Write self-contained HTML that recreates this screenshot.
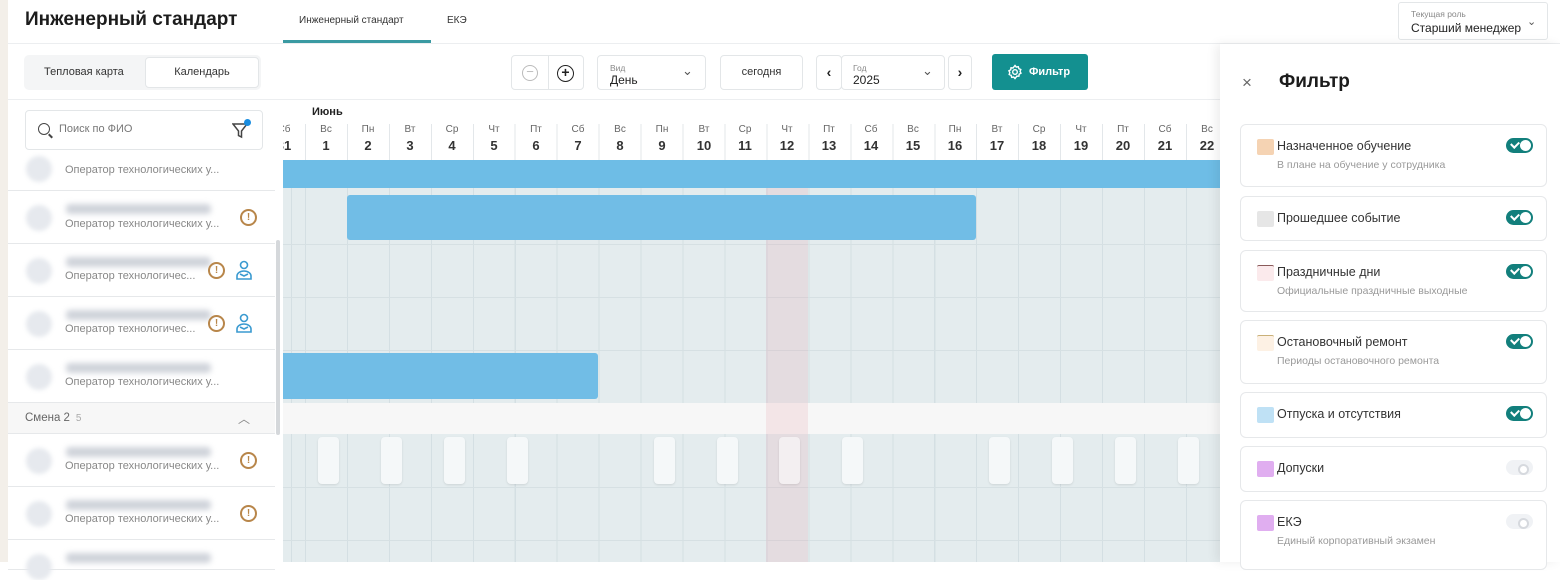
<!DOCTYPE html><html><head><meta charset="utf-8"><style>
*{box-sizing:border-box;margin:0;padding:0}
body{width:1560px;height:562px;overflow:hidden;position:relative;background:#fff;font-family:"Liberation Sans","DejaVu Sans",sans-serif;color:#222}
.a{position:absolute}
.btn{position:absolute;border:1px solid #e3e6e8;border-radius:4px;background:#fff}
.hd{position:absolute;top:24px;width:42px;text-align:center}
.hd .w{font-size:10px;color:#666;display:block}
.hd .n{font-size:13px;font-weight:bold;color:#333;display:block;margin-top:3px}
.row{position:absolute;left:8px;width:267px;border-bottom:1px solid #e6e8ea;background:#fff}
.av{position:absolute;left:18px;width:26px;height:26px;border-radius:50%;background:#e6e9ee;filter:blur(2px)}
.nm{position:absolute;left:58px;height:10px;width:145px;background:#cfd3da;border-radius:4px;filter:blur(3px)}
.rl{position:absolute;left:57px;font-size:11px;color:#888;white-space:nowrap}
.ex{position:absolute;width:17px;height:17px;border:2px solid #b8864a;border-radius:50%;font-size:10px;font-weight:bold;color:#b8864a;text-align:center;line-height:13px}
.card{position:absolute;left:1240px;width:307px;border:1px solid #e6e8ea;border-radius:6px;background:#fff}
.sw{position:absolute;left:16px;top:14px;width:17px;height:16px;border-radius:2px}
.ct{position:absolute;left:36px;top:14px;font-size:12.5px;color:#333}
.cs{position:absolute;left:36px;top:34px;font-size:10.5px;color:#999}
.tg{position:absolute;right:13px;top:13px;width:27px;height:15px;border-radius:8px;background:#127f7c}
.tg:after{content:"";position:absolute;right:2px;top:2px;width:11px;height:11px;border-radius:50%;background:#fff}
.tg:before{content:"";position:absolute;left:5px;top:3px;width:6px;height:4px;border-left:2px solid #fff;border-bottom:2px solid #fff;transform:rotate(-45deg)}
.tg.off{background:#f0f2f5}
.tg.off:before{display:none}
.tg.off:after{border:2px solid #d6d9de;width:7px;height:7px;top:4px;right:4px}
.wb{position:absolute;top:437px;width:21px;height:47px;border-radius:4px;background:#f5f8f9;box-shadow:0 1px 2px rgba(0,0,0,.1)}
.pi{position:absolute;width:18px;height:20px}
</style></head><body>
<div class="a" style="left:0;top:0;width:8px;height:562px;background:#f3efe9"></div>
<div class="a" style="left:25px;top:9px;font-size:19px;font-weight:bold;color:#1c1c1c">Инженерный стандарт</div>
<div class="a" style="left:299px;top:15px;font-size:10px;color:#333">Инженерный стандарт</div>
<div class="a" style="left:283px;top:40px;width:148px;height:3px;background:#3a9aa2"></div>
<div class="a" style="left:447px;top:15px;font-size:10px;color:#333">ЕКЭ</div>
<div class="a" style="left:8px;top:43px;width:1552px;height:1px;background:#eceef0"></div>
<div class="btn" style="left:1398px;top:2px;width:150px;height:38px;border-radius:3px"><div class="a" style="left:12px;top:6px;font-size:8.5px;color:#888">Текущая роль</div><div class="a" style="left:12px;top:18px;font-size:12px;color:#222">Старший менеджер</div><div class="a" style="left:128px;top:12px;font-size:11px;color:#555">⌄</div></div>
<!-- toolbar -->
<div class="a" style="left:24px;top:55px;width:237px;height:35px;background:#f4f5f6;border-radius:5px"></div>
<div class="a" style="left:44px;top:66px;font-size:11px;color:#333">Тепловая карта</div>
<div class="btn" style="left:145px;top:57px;width:114px;height:31px;text-align:center;line-height:29px;font-size:11px;color:#333">Календарь</div>
<div class="btn" style="left:511px;top:55px;width:73px;height:35px"><div class="a" style="left:36px;top:0;width:1px;height:33px;background:#e3e6e8"></div><div class="a" style="left:10px;top:9px;width:16px;height:16px;border:1.5px solid #bbb;border-radius:50%;text-align:center;line-height:12px;color:#bbb;font-size:13px">−</div><div class="a" style="left:45px;top:9px;width:17px;height:17px;border:1.8px solid #222;border-radius:50%;text-align:center;line-height:13px;color:#222;font-size:14px;font-weight:bold">+</div></div>
<div class="btn" style="left:597px;top:55px;width:109px;height:35px"><div class="a" style="left:12px;top:7px;font-size:8.5px;color:#888">Вид</div><div class="a" style="left:12px;top:17px;font-size:12px">День</div><div class="a" style="left:84px;top:7px;font-size:13px;color:#555">⌄</div></div>
<div class="btn" style="left:720px;top:55px;width:83px;height:35px;text-align:center;line-height:33px;font-size:11px;color:#333">сегодня</div>
<div class="btn" style="left:816px;top:55px;width:26px;height:35px;text-align:center;line-height:33px;font-size:14px;font-weight:bold">‹</div>
<div class="btn" style="left:841px;top:55px;width:104px;height:35px"><div class="a" style="left:11px;top:7px;font-size:8.5px;color:#888">Год</div><div class="a" style="left:11px;top:17px;font-size:12px">2025</div><div class="a" style="left:80px;top:7px;font-size:13px;color:#555">⌄</div></div>
<div class="btn" style="left:948px;top:55px;width:24px;height:35px;text-align:center;line-height:33px;font-size:14px;font-weight:bold">›</div>
<div class="a" style="left:992px;top:54px;width:96px;height:36px;background:#139090;border-radius:3px;color:#fff;font-size:11px;font-weight:bold;line-height:36px;padding-left:37px">Фильтр</div>
<svg class="a" style="left:1007px;top:64px" width="16" height="16" viewBox="0 0 16 16" fill="none" stroke="#fff" stroke-width="1.4"><circle cx="8" cy="8" r="2.3"/><path d="M8 1.5l1.3 1.6 2-.4.6 2 1.9.8-.7 1.9.9 1.8-1.8 1-.3 2-2-.1L8 14.5l-1.3-1.5-2 .3-.6-2-1.9-.8.6-1.9-.9-1.8 1.8-1 .3-2 2 .2z"/></svg>
<div class="a" style="left:8px;top:99px;width:1212px;height:1px;background:#eceef0"></div>
<!-- search -->
<div class="btn" style="left:25px;top:110px;width:238px;height:40px"><div class="a" style="left:12px;top:12px;width:12px;height:12px;border:1.8px solid #444;border-radius:50%"></div><div class="a" style="left:22px;top:24px;width:5px;height:2px;background:#444;transform:rotate(45deg)"></div><div class="a" style="left:33px;top:12px;font-size:11px;color:#777">Поиск по ФИО</div><svg class="a" style="left:206px;top:11px" width="16" height="17" viewBox="0 0 16 17" fill="none" stroke="#444" stroke-width="1.5"><path d="M1 2h14l-5.5 7v6l-3-1.5V9z"/></svg><div class="a" style="left:218px;top:8px;width:7px;height:7px;border-radius:50%;background:#1a8de0"></div></div>
<!-- grid -->
<div class="a" style="left:283px;top:100px;width:937px;height:462px;overflow:hidden">
<div class="a" style="left:0;top:60px;width:937px;height:402px;background-color:#e4ecee;background-image:repeating-linear-gradient(90deg,#d4dfe3 0 1px,transparent 1px 41.95px);background-position:22px 0"></div>
<div class="a" style="left:0;top:144px;width:937px;height:1px;background:#d6e0e3"></div>
<div class="a" style="left:0;top:197px;width:937px;height:1px;background:#d6e0e3"></div>
<div class="a" style="left:0;top:250px;width:937px;height:1px;background:#d6e0e3"></div>
<div class="a" style="left:0;top:387px;width:937px;height:1px;background:#d6e0e3"></div>
<div class="a" style="left:0;top:440px;width:937px;height:1px;background:#d6e0e3"></div>
<div class="a" style="left:0;top:303px;width:937px;height:31px;background:#f7f7f7"></div>
<div class="a" style="left:483px;top:60px;width:42px;height:402px;background:rgba(230,150,160,.18)"></div>
<div class="a" style="left:0;top:60px;width:937px;height:28px;background:#6ebde6"></div>
<div class="a" style="left:64px;top:95px;width:629px;height:45px;background:#71bde6;border-radius:3px"></div>
<div class="a" style="left:-5px;top:253px;width:320px;height:46px;background:#71bde6;border-radius:3px"></div>
<div class="a" style="left:29px;top:6px;font-size:11px;font-weight:bold">Июнь</div>
<div class="hd" style="left:-20px"><span class="w">Сб</span><span class="n">31</span></div>
<div class="hd" style="left:22px"><span class="w">Вс</span><span class="n">1</span></div>
<div class="hd" style="left:64px"><span class="w">Пн</span><span class="n">2</span></div>
<div class="hd" style="left:106px"><span class="w">Вт</span><span class="n">3</span></div>
<div class="hd" style="left:148px"><span class="w">Ср</span><span class="n">4</span></div>
<div class="hd" style="left:190px"><span class="w">Чт</span><span class="n">5</span></div>
<div class="hd" style="left:232px"><span class="w">Пт</span><span class="n">6</span></div>
<div class="hd" style="left:274px"><span class="w">Сб</span><span class="n">7</span></div>
<div class="hd" style="left:316px"><span class="w">Вс</span><span class="n">8</span></div>
<div class="hd" style="left:358px"><span class="w">Пн</span><span class="n">9</span></div>
<div class="hd" style="left:400px"><span class="w">Вт</span><span class="n">10</span></div>
<div class="hd" style="left:441px"><span class="w">Ср</span><span class="n">11</span></div>
<div class="hd" style="left:483px"><span class="w">Чт</span><span class="n">12</span></div>
<div class="hd" style="left:525px"><span class="w">Пт</span><span class="n">13</span></div>
<div class="hd" style="left:567px"><span class="w">Сб</span><span class="n">14</span></div>
<div class="hd" style="left:609px"><span class="w">Вс</span><span class="n">15</span></div>
<div class="hd" style="left:651px"><span class="w">Пн</span><span class="n">16</span></div>
<div class="hd" style="left:693px"><span class="w">Вт</span><span class="n">17</span></div>
<div class="hd" style="left:735px"><span class="w">Ср</span><span class="n">18</span></div>
<div class="hd" style="left:777px"><span class="w">Чт</span><span class="n">19</span></div>
<div class="hd" style="left:819px"><span class="w">Пт</span><span class="n">20</span></div>
<div class="hd" style="left:861px"><span class="w">Сб</span><span class="n">21</span></div>
<div class="hd" style="left:903px"><span class="w">Вс</span><span class="n">22</span></div>
<div class="a" style="left:22px;top:24px;width:900px;height:36px;background-image:repeating-linear-gradient(90deg,#e3e7ea 0 1px,transparent 1px 41.95px)"></div>
</div>
<div class="wb" style="left:318px"></div><div class="wb" style="left:381px"></div><div class="wb" style="left:444px"></div><div class="wb" style="left:507px"></div><div class="wb" style="left:654px"></div><div class="wb" style="left:717px"></div><div class="wb" style="left:779px;background:#f3eff1"></div><div class="wb" style="left:842px"></div><div class="wb" style="left:989px"></div><div class="wb" style="left:1052px"></div><div class="wb" style="left:1115px"></div><div class="wb" style="left:1178px"></div>
<!-- rows -->
<div class="row" style="top:158px;height:33px"><div class="av" style="top:-2px"></div><div class="rl" style="top:6px">Оператор технологических у...</div></div>
<div class="row" style="top:191px;height:53px"><div class="av" style="top:14px"></div><div class="nm" style="top:13px"></div><div class="rl" style="top:27px">Оператор технологических у...</div><div class="ex" style="left:232px;top:18px">!</div></div>
<div class="row" style="top:244px;height:53px"><div class="av" style="top:14px"></div><div class="nm" style="top:13px"></div><div class="rl" style="top:26px">Оператор технологичес...</div><div class="ex" style="left:200px;top:18px">!</div><svg class="pi" style="left:227px;top:16px" viewBox="0 0 18 20" fill="none" stroke="#3a9ad0" stroke-width="1.6"><circle cx="9" cy="5" r="3.5"/><path d="M2 19v-3a7 5 0 0 1 14 0v3zM5 14l4 2 4-2"/></svg></div>
<div class="row" style="top:297px;height:53px"><div class="av" style="top:14px"></div><div class="nm" style="top:13px"></div><div class="rl" style="top:26px">Оператор технологичес...</div><div class="ex" style="left:200px;top:18px">!</div><svg class="pi" style="left:227px;top:16px" viewBox="0 0 18 20" fill="none" stroke="#3a9ad0" stroke-width="1.6"><circle cx="9" cy="5" r="3.5"/><path d="M2 19v-3a7 5 0 0 1 14 0v3zM5 14l4 2 4-2"/></svg></div>
<div class="row" style="top:350px;height:53px"><div class="av" style="top:14px"></div><div class="nm" style="top:13px"></div><div class="rl" style="top:26px">Оператор технологических у...</div></div>
<div class="row" style="top:403px;height:31px;background:#f7f7f7"><div class="a" style="left:17px;top:9px;font-size:11.5px;color:#666">Смена 2 <span style="color:#aaa;font-size:10px">&nbsp;5</span></div><div class="a" style="left:230px;top:7px;font-size:12px;color:#888">︿</div></div>
<div class="row" style="top:434px;height:53px"><div class="av" style="top:14px"></div><div class="nm" style="top:13px"></div><div class="rl" style="top:26px">Оператор технологических у...</div><div class="ex" style="left:232px;top:18px">!</div></div>
<div class="row" style="top:487px;height:53px"><div class="av" style="top:14px"></div><div class="nm" style="top:13px"></div><div class="rl" style="top:26px">Оператор технологических у...</div><div class="ex" style="left:232px;top:18px">!</div></div>
<div class="row" style="top:540px;height:30px"><div class="av" style="top:14px"></div><div class="nm" style="top:13px"></div></div>
<div class="a" style="left:276px;top:240px;width:4px;height:195px;background:#d5d8db;border-radius:2px"></div>
<!-- filter panel -->
<div class="a" style="left:1220px;top:44px;width:340px;height:518px;background:#fff;box-shadow:-4px 0 10px rgba(0,0,0,.07)"></div>
<div class="a" style="left:1242px;top:73px;font-size:17px;color:#666">×</div>
<div class="a" style="left:1279px;top:71px;font-size:19px;font-weight:bold;color:#1c1c1c">Фильтр</div>
<div class="card" style="top:124px;height:63px"><div class="sw" style="background:#f5d3b3"></div><div class="ct">Назначенное обучение</div><div class="cs">В плане на обучение у сотрудника</div><div class="tg"></div></div>
<div class="card" style="top:196px;height:45px"><div class="sw" style="background:#e6e6e6"></div><div class="ct">Прошедшее событие</div><div class="tg"></div></div>
<div class="card" style="top:250px;height:62px"><div class="sw" style="background:#fbeaec;border-top:1px solid #8a5a5a"></div><div class="ct">Праздничные дни</div><div class="cs">Официальные праздничные выходные</div><div class="tg"></div></div>
<div class="card" style="top:320px;height:64px"><div class="sw" style="background:#fdf1e4;border-top:1px solid #c9b078"></div><div class="ct">Остановочный ремонт</div><div class="cs">Периоды остановочного ремонта</div><div class="tg"></div></div>
<div class="card" style="top:392px;height:46px"><div class="sw" style="background:#bfe1f5"></div><div class="ct">Отпуска и отсутствия</div><div class="tg"></div></div>
<div class="card" style="top:446px;height:46px"><div class="sw" style="background:#e0aef0"></div><div class="ct">Допуски</div><div class="tg off"></div></div>
<div class="card" style="top:500px;height:70px"><div class="sw" style="background:#e0aef0"></div><div class="ct">ЕКЭ</div><div class="cs">Единый корпоративный экзамен</div><div class="tg off"></div></div>
</body></html>
